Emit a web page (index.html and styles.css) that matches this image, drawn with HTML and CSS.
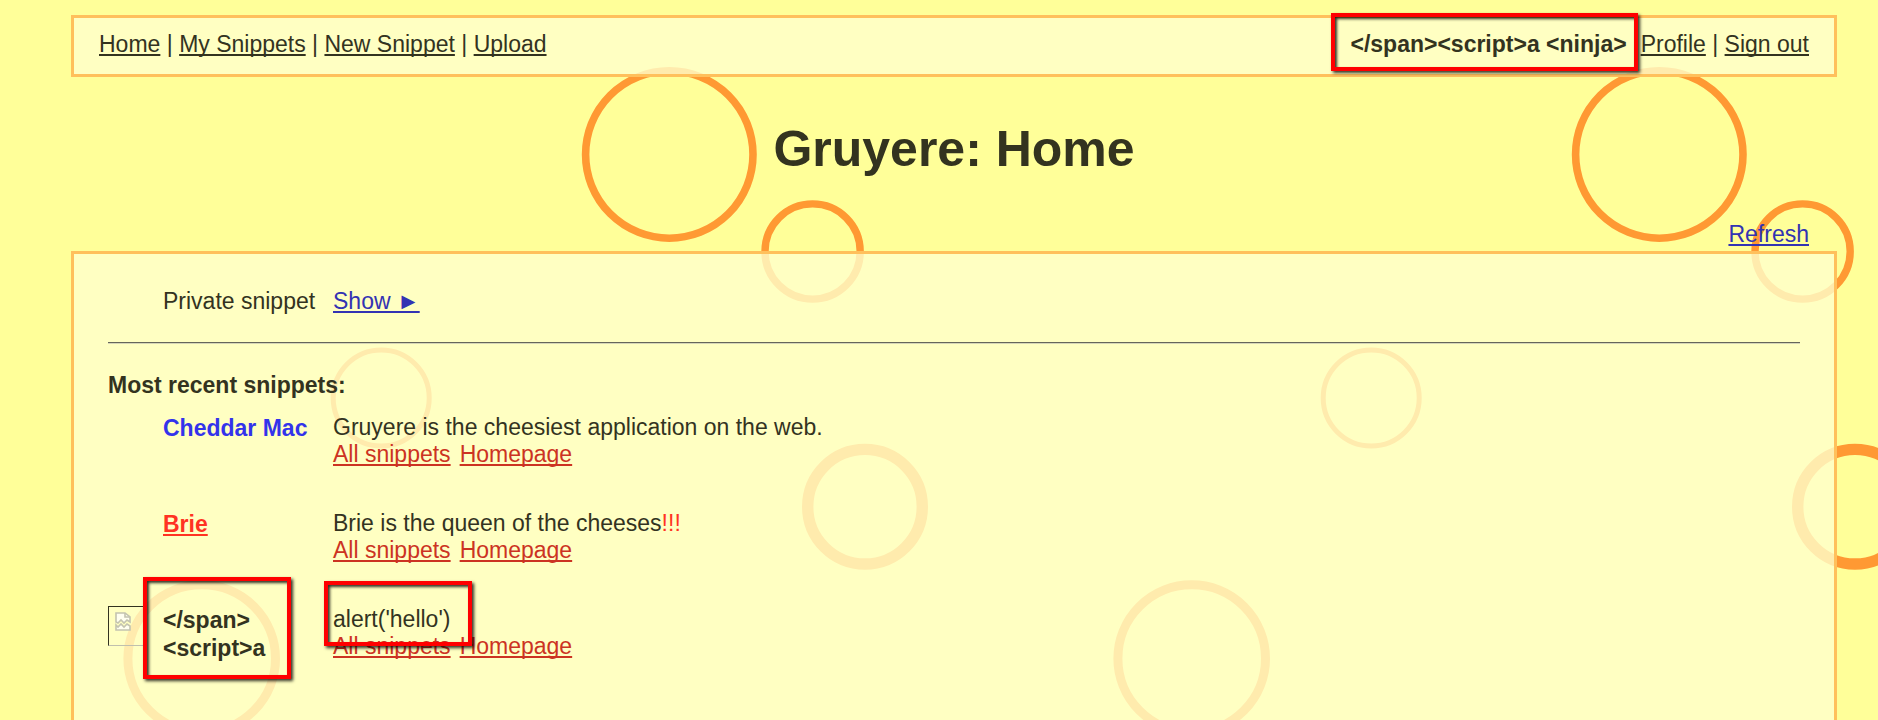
FILE: index.html
```html
<!DOCTYPE html>
<html lang="en">
<head>
<meta charset="utf-8">
<title>Gruyere: Home</title>
<link rel="stylesheet" href="styles.css">
</head>
<body>
<svg class="holes" width="100%" height="100%" aria-hidden="true">
  <defs>
    <pattern id="cheese" width="990" height="900" patternUnits="userSpaceOnUse">
      <g fill="none" stroke="#ff9933">
        <circle cx="669.3" cy="154.5" r="83.7" stroke-width="7.6"/>
        <circle cx="812.6" cy="251.5" r="47.6" stroke-width="7.4"/>
        <circle cx="381.2" cy="398" r="48" stroke-width="5"/>
        <circle cx="865" cy="506.7" r="57.3" stroke-width="11.4"/>
        <circle cx="-125" cy="506.7" r="57.3" stroke-width="11.4"/>
        <circle cx="201.7" cy="658.5" r="73.8" stroke-width="9"/>
      </g>
    </pattern>
  </defs>
  <rect width="100%" height="100%" fill="url(#cheese)"/>
</svg>
<div class="page">
  <header class="box menu">
    <nav><a href="#">Home</a> | <a href="#">My Snippets</a> | <a href="#">New Snippet</a> | <a href="#">Upload</a></nav>
    <div class="account">
      <b class="user">&lt;/span&gt;&lt;script&gt;a &lt;ninja&gt;<span class="mark mark-user"></span></b>
      <span><a href="#">Profile</a> | <a href="#">Sign out</a></span>
    </div>
  </header>
  <h1>Gruyere: Home</h1>
  <div class="refresh"><a href="#">Refresh</a></div>
  <main class="box content">
    <table>
      <tr>
        <td class="pic"></td>
        <td class="name">Private snippet</td>
        <td><a class="show" href="#">Show &#9658;</a></td>
      </tr>
    </table>
    <hr>
    <h2>Most recent snippets:</h2>
    <table class="recent">
      <tr>
        <td class="pic"></td>
        <td class="name"><b class="blue">Cheddar Mac</b></td>
        <td>Gruyere is the cheesiest application on the web.<div class="links"><a href="#">All snippets</a><a href="#">Homepage</a></div></td>
      </tr>
      <tr>
        <td class="pic"></td>
        <td class="name"><b><a class="red" href="#">Brie</a></b></td>
        <td>Brie is the queen of the cheeses<span class="red">!!!</span><div class="links"><a href="#">All snippets</a><a href="#">Homepage</a></div></td>
      </tr>
      <tr>
        <td class="pic"><div class="broken"><svg width="16" height="19" viewBox="0 0 16 19" fill="none" stroke="#c4c4b0" stroke-width="1.6" aria-hidden="true"><path fill="#fffff0" d="M1 10V1h9l5 4v5l-3-2-3 3-3-3-3 3z"/><path d="M10 1v4h5"/><path fill="#fffff0" d="M1 13v5h14v-4l-3-2-3 3-3-3-3 3z"/></svg></div></td>
        <td class="name"><b>&lt;/span&gt;<br>&lt;script&gt;a</b><span class="mark mark-name"></span></td>
        <td class="text">alert('hello')<div class="links"><a href="#">All snippets</a><a href="#">Homepage</a></div><span class="mark mark-alert"></span></td>
      </tr>
    </table>
  </main>
</div>
</body>
</html>
```
FILE: styles.css
```css
* { box-sizing: border-box; }
body {
  margin: 0;
  background: #ffff99;
  color: #33331f;
  font: 23px/27px "Liberation Sans", Arial, sans-serif;
}
a {
  color: inherit;
  text-decoration-thickness: 2px;
  text-underline-offset: 2px;
  text-decoration-skip-ink: none;
}
.holes { position: absolute; inset: 0; }
.page {
  position: relative;
  display: flex;
  flex-direction: column;
  min-height: 100vh;
  padding: 15px 41px 0 71px;
}
.box {
  border: 3px solid #ffc05c;
  background: rgba(255, 255, 204, .8);
  background-clip: padding-box;
}
.menu {
  display: flex;
  justify-content: space-between;
  padding: 13px 25px 16px;
}
.account { display: flex; gap: 14px; }
.user { position: relative; }
h1 {
  margin: 44px 0 43px;
  font-size: 50px;
  line-height: 57px;
  text-align: center;
}
.refresh { padding: 0 28px 3px; text-align: right; }
.refresh, .show { color: #3333b3; }
.content {
  flex: 1;
  border-bottom: 0;
  padding: 34px 34px 0;
}
table { width: 100%; border-collapse: collapse; table-layout: fixed; }
td { position: relative; padding: 0; vertical-align: top; }
.pic { width: 55px; }
.name { width: 170px; }
hr {
  height: 2px;
  margin: 27px 0 28px;
  border: 0;
  border-top: 1px solid #66665a;
  border-bottom: 1px solid #d6d6b8;
}
h2 { margin: 0 0 15px; font-size: 23px; line-height: 27px; }
.recent tr { height: 96px; }
.recent .name { line-height: 28px; }
.links { display: flex; gap: 9px; color: #cc3322; }
.blue { color: #3333eb; }
.red { color: #ff3322; }
.broken {
  width: 38px;
  height: 40px;
  padding: 5px 6px;
  border: 1px solid #33331f;
  border-right: 0;
  border-bottom-color: #c0c0ae;
  line-height: 0;
}
.mark {
  position: absolute;
  border: 4px solid #ff0000;
  box-shadow: 2px 2px 3px rgba(0, 0, 0, .8), inset 2px 2px 3px rgba(0, 0, 0, .8);
}
.mark-user { inset: -18px -11px -13px -19px; }
.mark-name { left: -20px; top: -29px; width: 148px; height: 102px; }
.mark-alert { left: -9px; top: -25px; width: 148px; height: 65px; }
```
